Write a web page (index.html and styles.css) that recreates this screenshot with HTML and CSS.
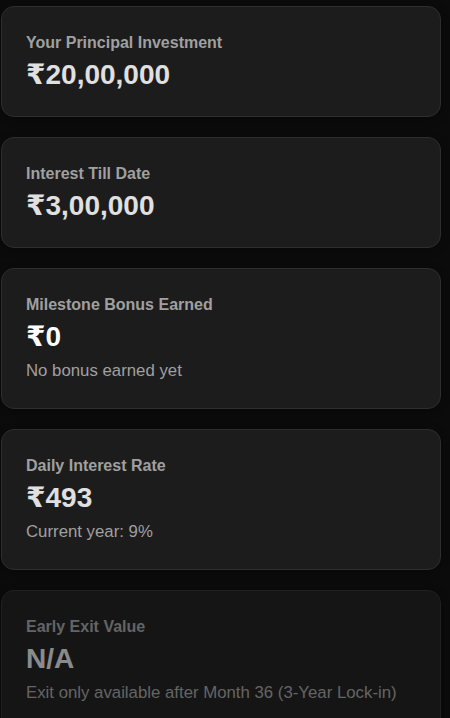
FILE: index.html
```html
<!DOCTYPE html>
<html lang="en">
<head>
<meta charset="utf-8">
<title>Investment Summary</title>
<link rel="stylesheet" href="styles.css">
</head>
<body>
<main class="stack">
  <section class="card">
    <div class="label">Your Principal Investment</div>
    <div class="value">₹20,00,000</div>
  </section>
  <section class="card">
    <div class="label">Interest Till Date</div>
    <div class="value">₹3,00,000</div>
  </section>
  <section class="card">
    <div class="label">Milestone Bonus Earned</div>
    <div class="value value-bright">₹0</div>
    <div class="note">No bonus earned yet</div>
  </section>
  <section class="card">
    <div class="label">Daily Interest Rate</div>
    <div class="value">₹493</div>
    <div class="note">Current year: 9%</div>
  </section>
  <section class="card card-disabled">
    <div class="label">Early Exit Value</div>
    <div class="value">N/A</div>
    <div class="note">Exit only available after Month 36 (3-Year Lock-in)</div>
  </section>
</main>
</body>
</html>
```
FILE: styles.css
```css
html, body {
  margin: 0;
  background: #0b0b0b;
}
body {
  font-family: "Liberation Sans", Arial, "DejaVu Sans", sans-serif;
  color: #e0e0e0;
}
.stack {
  display: flex;
  flex-direction: column;
  gap: 20px;
  width: 440px;
  padding: 6px 0 0 1px;
}
.card {
  background: #1c1c1c;
  border: 1px solid #2e2e2e;
  border-radius: 13px;
  padding: 25px 24px 25px 24px;
  box-shadow: 0 2px 8px rgba(0, 0, 0, 0.35);
}
.label {
  font-size: 16px;
  font-weight: 700;
  line-height: 22px;
  color: #a0a0a0;
}
.value {
  margin-top: 5px;
  font-size: 28px;
  font-weight: 700;
  line-height: 32px;
  color: #e0e0e0;
}
.value-bright {
  color: #ffffff;
}
.note {
  margin-top: 6px;
  font-size: 16.8px;
  line-height: 24px;
  color: #a0a0a0;
}
.card-disabled {
  opacity: 0.6;
}
```
